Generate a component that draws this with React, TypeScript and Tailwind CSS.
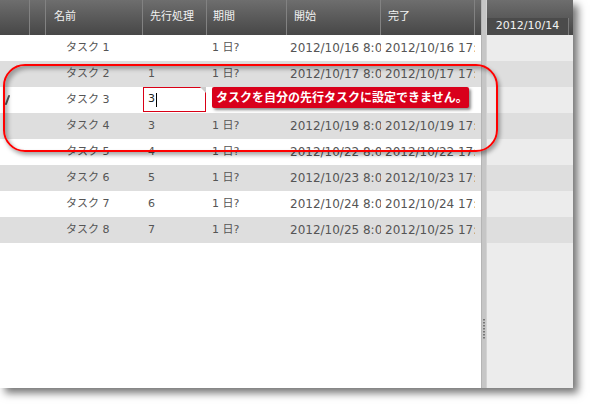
import React from "react";

const rows = [
  { name: "タスク 1", pred: "", dur: "1 日?", start: "2012/10/16 8:00", end: "2012/10/16 17:00" },
  { name: "タスク 2", pred: "1", dur: "1 日?", start: "2012/10/17 8:00", end: "2012/10/17 17:00" },
  { name: "タスク 3", pred: "3", dur: "", start: "", end: "", edit: true },
  { name: "タスク 4", pred: "3", dur: "1 日?", start: "2012/10/19 8:00", end: "2012/10/19 17:00" },
  { name: "タスク 5", pred: "4", dur: "1 日?", start: "2012/10/22 8:00", end: "2012/10/22 17:00" },
  { name: "タスク 6", pred: "5", dur: "1 日?", start: "2012/10/23 8:00", end: "2012/10/23 17:00" },
  { name: "タスク 7", pred: "6", dur: "1 日?", start: "2012/10/24 8:00", end: "2012/10/24 17:00" },
  { name: "タスク 8", pred: "7", dur: "1 日?", start: "2012/10/25 8:00", end: "2012/10/25 17:00" },
];

const hdr = "bg-gradient-to-b from-[#6e6e6e] to-[#474747]";

export default function App() {
  return (
    <div className="relative w-[590px] h-[404px] bg-white overflow-hidden font-['DejaVu_Sans','Noto_Sans_CJK_JP',sans-serif] text-[11px]">
      <div className="flex w-[573px] h-[388px] bg-white shadow-[5px_5px_8px_rgba(0,0,0,0.55)]">
        {/* left grid */}
        <div className="w-[481px] flex flex-col">
          <div className={`flex h-[35px] ${hdr} text-[#f2f2f2]`}>
            <div className="w-[30px] border-r border-[#828282]" />
            <div className="w-[16px] border-r border-[#828282]" />
            <div className="w-[97px] border-r border-[#828282] pl-[8px] flex items-center">名前</div>
            <div className="w-[64px] border-r border-[#828282] pl-[7px] flex items-center">先行処理</div>
            <div className="w-[80px] border-r border-[#828282] pl-[6px] flex items-center">期間</div>
            <div className="w-[94px] border-r border-[#828282] pl-[7px] flex items-center">開始</div>
            <div className="w-[94px] border-r border-[#828282] pl-[7px] flex items-center">完了</div>
            <div className="flex-1" />
          </div>
          {rows.map((r, i) => (
            <div
              key={i}
              className={`flex h-[26px] items-center text-[#555555] ${i % 2 === 1 ? "bg-[#dedede]" : "bg-white"}`}
            >
              <div className="w-[30px] h-full flex items-center">
                {r.edit && (
                  <svg width="10" height="12" viewBox="0 0 10 12" className="ml-[2px]">
                    <path d="M7 2 L4 10" stroke="#5a5a5a" strokeWidth="2" strokeLinecap="round" />
                  </svg>
                )}
              </div>
              <div className="w-[16px]" />
              <div className="w-[97px] pl-[20px] whitespace-nowrap overflow-hidden">{r.name}</div>
              <div className="w-[64px] h-full whitespace-nowrap overflow-hidden">
                {r.edit ? (
                  <div className="relative h-[25px] w-[63px] border border-[#d90015] bg-white flex items-center pl-[4px] text-[#222]">
                    <span>{r.pred}</span>
                    <span className="w-[1px] h-[14px] bg-black ml-[1px]" />
                    <div className="absolute -top-[1px] -right-[1px] w-0 h-0 border-l-[6px] border-l-transparent border-t-[6px] border-t-[#cccccc]" />
                  </div>
                ) : (
                  <div className="h-full flex items-center pl-[5px]">{r.pred}</div>
                )}
              </div>
              <div className="w-[80px] pl-[5px] whitespace-nowrap overflow-hidden">{r.dur}</div>
              <div className="w-[94px] pl-[3px] pr-[1px] text-[12px] whitespace-nowrap overflow-hidden">{r.start}</div>
              <div className="w-[94px] pl-[4px] pr-[2px] text-[12px] whitespace-nowrap overflow-hidden">{r.end}</div>
              <div className="flex-1" />
            </div>
          ))}
          <div className="flex-1 bg-white" />
        </div>

        {/* splitter */}
        <div className="w-[6px] flex flex-col bg-[#c6c6c6] border-l border-[#b4b4b4] border-r border-r-[#d2d2d2] items-center justify-center">
          <svg width="4" height="20" viewBox="0 0 4 20" className="mt-[270px]">
            {[1, 4, 7, 10, 13, 16, 19].map((y) => (
              <rect key={y} x="1" y={y - 1} width="2" height="1.5" fill="#777" />
            ))}
          </svg>
        </div>

        {/* right pane */}
        <div className="flex-1 flex flex-col bg-[#ececec]">
          <div className={`h-[35px] flex flex-col ${hdr}`}>
            <div className="h-[18px]" />
            <div className="h-[17px] flex">
              <div className="w-[82px] bg-[#4b4b4b] border-r border-[#7a7a7a] text-[#f2f2f2] flex items-center justify-center">
                2012/10/14
              </div>
              <div className="flex-1" />
            </div>
          </div>
          {rows.map((_, i) => (
            <div key={i} className={`h-[26px] ${i % 2 === 1 ? "bg-[#dedede]" : "bg-[#ececec]"}`} />
          ))}
          <div className="flex-1" />
        </div>
      </div>

      {/* tooltip */}
      <div className="absolute left-[212px] top-[87px] h-[21px] w-[257px] bg-[#d9001b] rounded-[2px] shadow-[2px_2px_3px_rgba(0,0,0,0.45)] text-white font-bold text-[12px] flex items-center pl-[4px] whitespace-nowrap">
        タスクを自分の先行タスクに設定できません。
      </div>

      {/* annotation */}
      <div className="absolute left-[3px] top-[64px] w-[495px] h-[88px] rounded-[22px] border-2 border-[#ff0000] shadow-[2px_3px_4px_rgba(0,0,0,0.35),inset_3px_3px_4px_rgba(0,0,0,0.3)]" />
    </div>
  );
}
